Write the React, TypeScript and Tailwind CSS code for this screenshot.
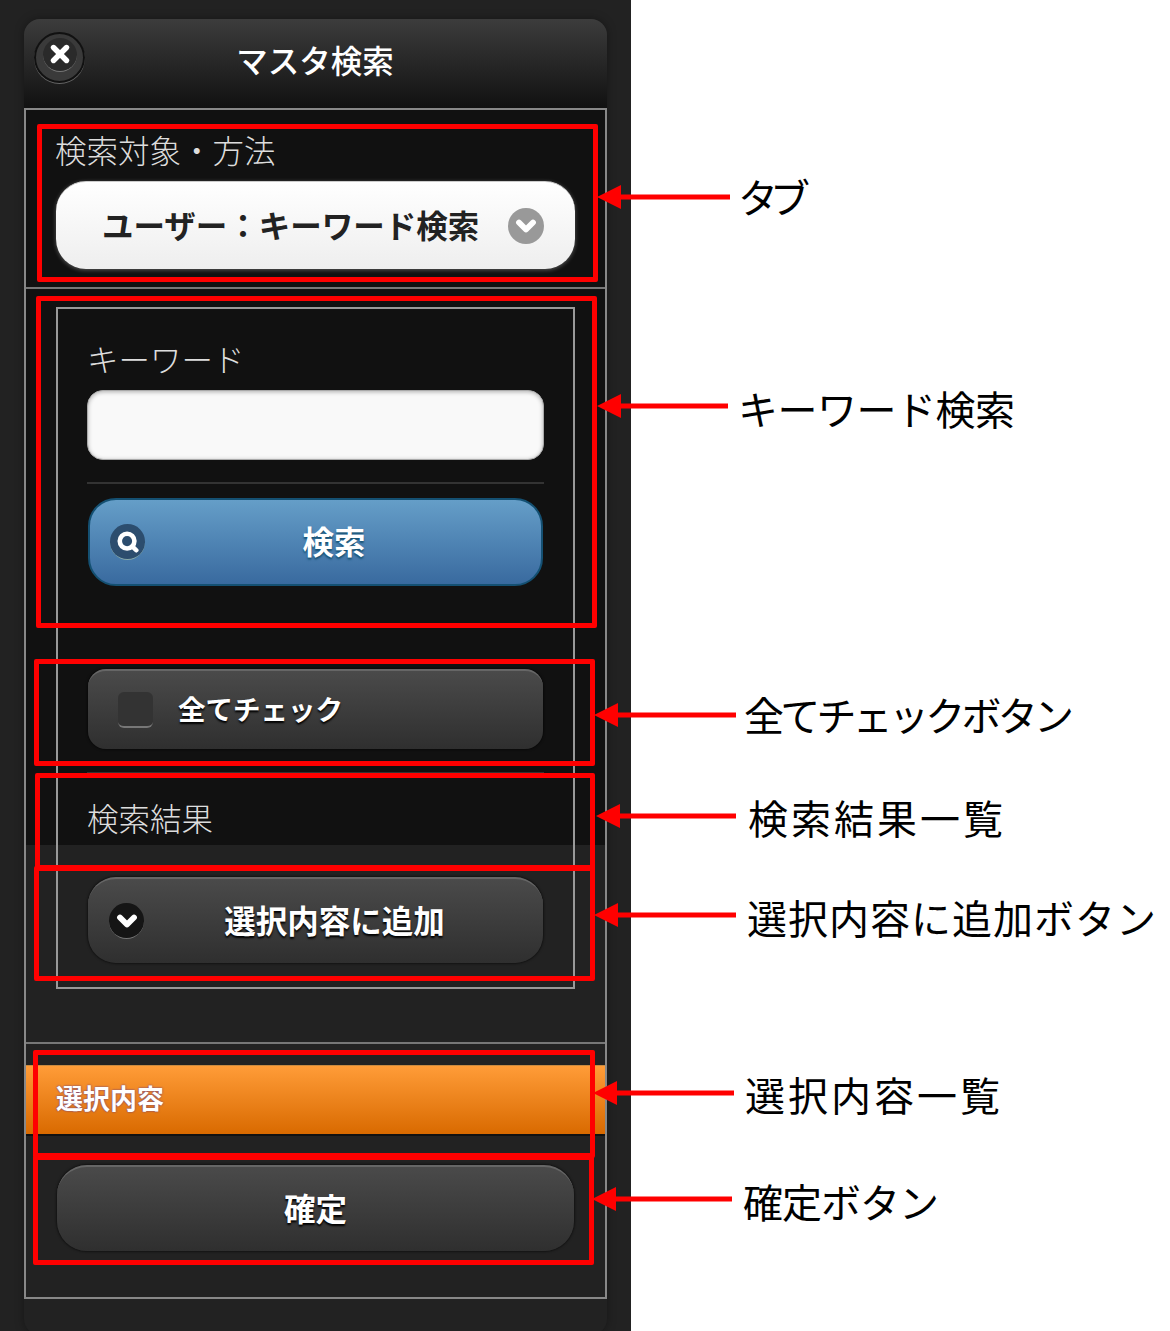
import React from "react";
import { X, ChevronDown, Search } from "lucide-react";

const FONT = "font-['Noto_Sans_CJK_JP','Noto_Sans',sans-serif]";

function Box({ c }: { c: string }) {
  return <div className={`absolute border-[5px] border-[#ff0000] rounded-[2px] ${c}`} />;
}

function Arrow({ c, w }: { c: string; w: number }) {
  return (
    <svg className={`absolute ${c}`} width={w} height={26} viewBox={`0 0 ${w} 26`}>
      <path d={`M0 13 L24 1 L24 10.5 L${w} 10.5 L${w} 15.5 L24 15.5 L24 25 Z`} fill="#ff0000" />
    </svg>
  );
}

function Note({ c, children }: { c: string; children: React.ReactNode }) {
  return (
    <div className={`absolute text-[40px] leading-[48px] text-black whitespace-nowrap ${c}`}>{children}</div>
  );
}

const darkBtn =
  "flex items-center bg-[linear-gradient(#4a4a4a,#2f2f2f)] border-t-2 border-t-[#666] shadow-[0_0_3px_#000]";

export default function App() {
  return (
    <div className={`relative w-[1170px] h-[1331px] overflow-hidden bg-white flex ${FONT}`}>
      <div className="w-[631px] h-[1331px] bg-[#222] pt-[19px] pl-[24px] overflow-hidden">
        <div className="w-[583px] h-[1316px] rounded-[16px] bg-[#222] shadow-[0_0_10px_rgba(0,0,0,0.35)]">
          {/* header */}
          <div className="h-[89px] rounded-t-[16px] bg-[linear-gradient(#3c3c3c,#111)] flex items-center justify-center relative">
            <div className="absolute left-[10px] top-[13px] w-[51px] h-[51px] rounded-full bg-[#3a3a3a] border-2 border-[#111] shadow-[0_1px_0_#666] flex items-center justify-center">
              <div className="w-[34px] h-[34px] rounded-full -mt-[6px] bg-[#2a2a2a] border-b border-[#777] flex items-center justify-center">
                <X size={26} strokeWidth={5} color="#fff" />
              </div>
            </div>
            <span className="text-[31.5px] leading-[40px] font-medium text-white -mt-[10px] -ml-[1px]">マスタ検索</span>
          </div>

          {/* content frame */}
          <div className="border-2 border-[#888] h-[1191px]">
            {/* tab section */}
            <div className="h-[179px] bg-[#111] border-b-2 border-[#777] pt-[19px] pl-[30px] pr-[29px]">
              <div className="-ml-px text-[31.5px] leading-[40px] font-light text-[#ddd]">検索対象・方法</div>
              <div className="mt-[12px] h-[88px] w-[519px] rounded-[30px] bg-[linear-gradient(#fff,#eee)] border-t border-[#ccc] shadow-[0_1px_4px_rgba(255,255,255,0.3)] flex items-center justify-between pl-[46px] pr-[31px]">
                <span className="-mt-[4px] text-[31.5px] leading-[40px] font-bold text-[#222]">ユーザー：キーワード検索</span>
                <span className="w-[36px] h-[36px] rounded-full bg-[#999] flex items-center justify-center">
                  <ChevronDown size={28} strokeWidth={5} color="#fff" />
                </span>
              </div>
            </div>

            {/* search section */}
            <div className="h-[755px] border-b-2 border-[#777] pt-[18px] px-[30px] bg-[linear-gradient(#111_556px,#222_556px)]">
              <div className="h-[682px] border-2 border-[#999] pt-[29px] px-[29px]">
                <div className="text-[31.5px] leading-[40px] font-light text-[#ddd]">キーワード</div>
                <div className="mt-[12px] h-[70px] rounded-[16px] bg-[#f9f9f9] border border-[#aaa] shadow-[inset_0_1px_4px_rgba(0,0,0,0.3)]" />
                <div className="mt-[22px] h-[2px] bg-[#333]" />
                <div className="mt-[14px] mx-px h-[88px] rounded-[28px] border-2 border-[#145072] bg-[linear-gradient(#659ec8,#396a9f)] flex items-center pl-[20px] pr-[18px]">
                  <span className="w-[35px] h-[36px] rounded-full bg-[#2c4d6e] border-b border-[#8aa] flex items-center justify-center">
                    <Search size={22} strokeWidth={5} color="#fff" />
                  </span>
                  <span className="-mt-[4px] flex-1 text-center text-[31.5px] leading-[40px] font-bold text-white [text-shadow:0_2px_2px_#145072]">検索</span>
                </div>
                <div className={`mt-[83px] mx-px h-[80px] rounded-[18px] pl-[30px] ${darkBtn}`}>
                  <span className="w-[35px] h-[36px] rounded-[6px] bg-[#333] border-b-2 border-[#777]" />
                  <span className="-mt-[4px] ml-[25px] text-[27.5px] leading-[36px] font-bold text-white [text-shadow:0_2px_2px_#000]">全てチェック</span>
                </div>
                <div className="mt-[23px] h-px bg-[#333]" />
                <div className="mt-[24px] text-[31.5px] leading-[40px] font-light text-[#ddd]">検索結果</div>
                <div className={`mt-[40px] mx-px h-[86px] rounded-[28px] pl-[21px] pr-[18px] ${darkBtn}`}>
                  <span className="w-[35px] h-[36px] rounded-full bg-[#151515] border-b border-[#777] flex items-center justify-center">
                    <ChevronDown size={28} strokeWidth={5} color="#fff" />
                  </span>
                  <span className="-mt-[4px] flex-1 text-center text-[31.5px] leading-[40px] font-bold text-white [text-shadow:0_2px_2px_#000]">選択内容に追加</span>
                </div>
              </div>
            </div>

            {/* selected section */}
            <div className="pt-[21px]">
              <div className="h-[71px] flex items-center pl-[30px] bg-[linear-gradient(#ff9c38,#d96a00)] border-t border-[#c98a40] border-b-2 border-b-[#111]">
                <span className="-mt-[4px] text-[27px] leading-[36px] font-bold text-white [text-shadow:0_0_2px_#4b2a9a]">選択内容</span>
              </div>
              <div className={`mt-[29px] mx-[31px] h-[86px] rounded-[30px] justify-center ${darkBtn}`}>
                <span className="-mt-[4px] text-[31.5px] leading-[40px] font-bold text-white [text-shadow:0_2px_2px_#000]">確定</span>
              </div>
            </div>
          </div>
        </div>
      </div>

      {/* annotation overlay */}
      <Box c="left-[37px] top-[124px] w-[561px] h-[158px]" />
      <Box c="left-[36px] top-[296px] w-[561px] h-[332px]" />
      <Box c="left-[34px] top-[659px] w-[561px] h-[107px]" />
      <Box c="left-[35px] top-[773px] w-[560px] h-[97px]" />
      <Box c="left-[34px] top-[866px] w-[561px] h-[115px]" />
      <Box c="left-[33px] top-[1050px] w-[562px] h-[108px]" />
      <Box c="left-[33px] top-[1155px] w-[561px] h-[110px]" />

      <Arrow c="left-[597px] top-[184px]" w={133} />
      <Arrow c="left-[597px] top-[393px]" w={131} />
      <Arrow c="left-[594px] top-[702px]" w={142} />
      <Arrow c="left-[596px] top-[803px]" w={140} />
      <Arrow c="left-[594px] top-[902px]" w={142} />
      <Arrow c="left-[593px] top-[1080px]" w={141} />
      <Arrow c="left-[592px] top-[1186px]" w={140} />

      <Note c="left-[738px] top-[172px] tracking-[-8px]">タブ</Note>
      <Note c="left-[738px] top-[384px] tracking-[-0.5px]">キーワード検索</Note>
      <Note c="left-[744px] top-[690px] tracking-[-3.75px]">全てチェックボタン</Note>
      <Note c="left-[748px] top-[793px] tracking-[3px]">検索結果一覧</Note>
      <Note c="left-[747px] top-[893px] tracking-[1px]">選択内容に追加ボタン</Note>
      <Note c="left-[745px] top-[1070px] tracking-[3px]">選択内容一覧</Note>
      <Note c="left-[743px] top-[1177px] tracking-[-1px]">確定ボタン</Note>
    </div>
  );
}
